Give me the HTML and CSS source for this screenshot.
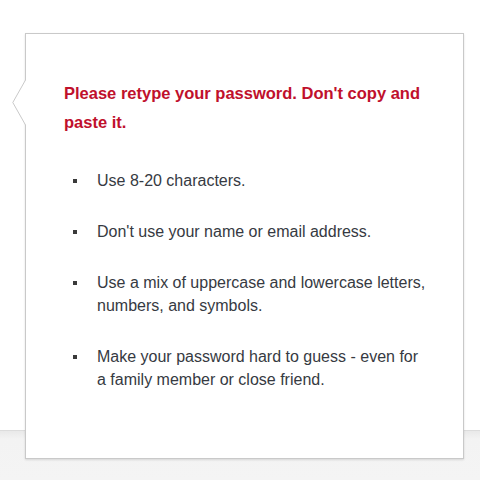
FILE: index.html
```html
<!DOCTYPE html>
<html lang="en">
<head>
<meta charset="utf-8">
<title>Password hint</title>
<link rel="stylesheet" href="styles.css">
</head>
<body>
<div class="page">
  <div class="content"></div>
  <div class="band"></div>
  <div class="tooltip">
    <svg class="tip" width="16" height="46" viewBox="0 0 16 46" aria-hidden="true">
      <polygon points="13.5,0 0.8,22.5 13.5,45 16,45 16,0" fill="#ffffff"/>
      <polyline points="13.5,0 0.8,22.5 13.5,45" fill="none" stroke="#c9c9c9" stroke-width="1"/>
    </svg>
    <p class="title">Please retype your password. Don't copy and paste it.</p>
    <ul class="rules">
      <li>Use 8-20 characters.</li>
      <li>Don't use your name or email address.</li>
      <li>Use a mix of uppercase and lowercase letters, numbers, and symbols.</li>
      <li>Make your password hard to guess - even for a&nbsp;family member or close friend.</li>
    </ul>
  </div>
</div>
</body>
</html>
```

FILE: styles.css
```css
html, body {
  margin: 0;
  padding: 0;
}

body {
  background: #ffffff;
  font-family: "Liberation Sans", Arial, sans-serif;
}

.page {
  position: relative;
  width: 480px;
  height: 480px;
  overflow: hidden;
  display: flex;
  flex-direction: column;
}

.content {
  height: 430px;
  background: #ffffff;
}

.band {
  flex: 1;
  border-top: 1px solid #dcdcdc;
  background: linear-gradient(#e9e9e9, #f3f3f3 8px, #f4f4f4);
}

.tooltip {
  position: absolute;
  left: 25px;
  top: 33px;
  width: 439px;
  height: 426px;
  box-sizing: border-box;
  border: 1px solid #c9c9c9;
  background: #ffffff;
  box-shadow: 0 1px 2px rgba(0, 0, 0, 0.12);
  padding: 45px 20px 0 38px;
}

.tip {
  position: absolute;
  left: -14px;
  top: 46px;
  display: block;
}

.title {
  margin: 0;
  width: 370px;
  color: #c0102c;
  font-weight: bold;
  font-size: 16.5px;
  line-height: 29px;
}

.rules {
  list-style: none;
  margin: 32px 0 0 0;
  padding: 0;
  display: flex;
  flex-direction: column;
  gap: 28px;
}

.rules li {
  position: relative;
  padding-left: 33px;
  width: 338px;
  color: #363a42;
  font-size: 16px;
  line-height: 23px;
}

.rules li::before {
  content: "";
  position: absolute;
  left: 9px;
  top: 10px;
  width: 4px;
  height: 4px;
  background: #3a3a3a;
}
```
